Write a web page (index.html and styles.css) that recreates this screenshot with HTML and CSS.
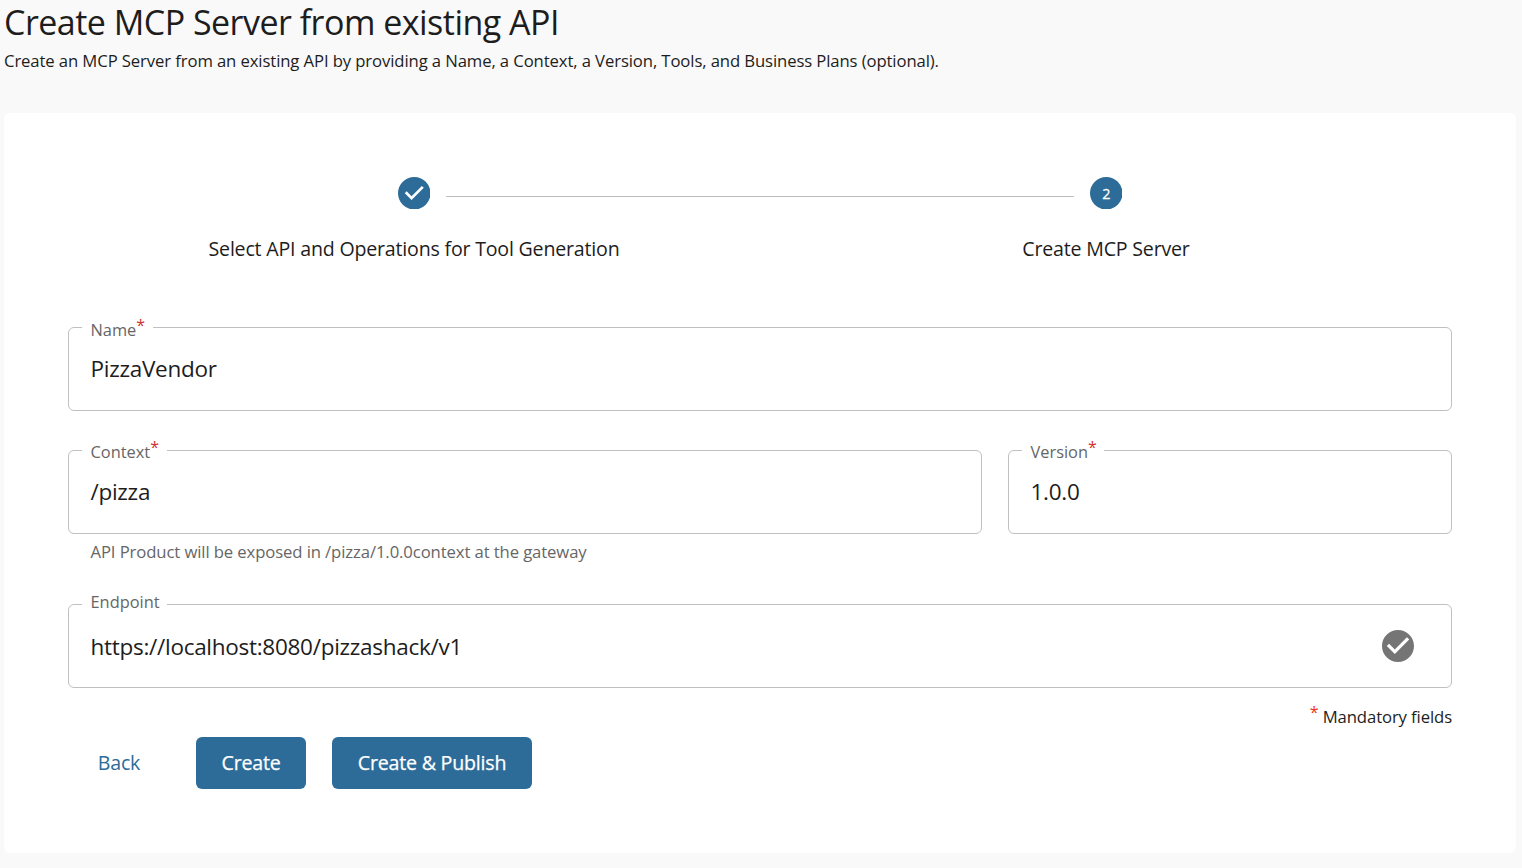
FILE: index.html
```html
<!DOCTYPE html>
<html lang="en">
<head>
<meta charset="utf-8">
<title>Create MCP Server from existing API</title>
<link rel="stylesheet" href="styles.css">
</head>
<body>
<header class="page-header">
  <h1 class="title"><span>Create MCP Server from existing API</span></h1>
  <p class="subtitle"><span>Create an MCP Server from an existing API by providing a Name, a Context, a Version, Tools, and Business Plans (optional).</span></p>
</header>
<main class="card">
  <ol class="stepper">
    <li class="step">
      <svg class="step-icon" viewBox="0 0 23.6 23.6"><path d="M12 0a12 12 0 1 0 0 24 12 12 0 0 0 0-24zm-2 17l-5-5 1.4-1.4 3.6 3.6 7.6-7.6L19 8l-9 9z"/></svg>
      <span class="step-label">Select API and Operations for Tool Generation</span>
    </li>
    <li class="connector"></li>
    <li class="step">
      <svg class="step-icon" viewBox="0 0 23.6 23.6"><circle cx="12" cy="12" r="12"/><text class="step-number" x="12" y="16" text-anchor="middle">2</text></svg>
      <span class="step-label">Create MCP Server</span>
    </li>
  </ol>
  <form class="form">
    <fieldset class="field name">
      <legend class="legend">Name<sup class="star">*</sup></legend>
      <span class="value">PizzaVendor</span>
    </fieldset>
    <div class="row">
      <fieldset class="field context">
        <legend class="legend">Context<sup class="star">*</sup></legend>
        <span class="value">/pizza</span>
      </fieldset>
      <fieldset class="field version">
        <legend class="legend">Version<sup class="star">*</sup></legend>
        <span class="value">1.0.0</span>
      </fieldset>
    </div>
    <p class="helper"><span>API Product will be exposed in /pizza/1.0.0context at the gateway</span></p>
    <fieldset class="field endpoint">
      <legend class="legend">Endpoint</legend>
      <span class="value">https://localhost:8080/pizzashack/v1</span>
      <svg class="valid" viewBox="2 2 20 20"><path d="M12 2C6.48 2 2 6.48 2 12s4.48 10 10 10 10-4.48 10-10S17.52 2 12 2zm-2 15l-5-5 1.41-1.41L10 14.17l7.59-7.59L19 8l-9 9z"/></svg>
    </fieldset>
    <p class="mandatory"><sup class="star">*</sup> <span>Mandatory fields</span></p>
    <div class="actions">
      <button type="button" class="btn back">Back</button>
      <button type="button" class="btn create">Create</button>
      <button type="button" class="btn publish">Create &amp; Publish</button>
    </div>
  </form>
</main>
</body>
</html>
```
FILE: styles.css
```css
* { box-sizing: border-box; }
body { margin: 0; height: 868px; overflow: hidden; background: #f9f9f9; color: #1d1d1d; font-family: "Open Sans", "Noto Sans", sans-serif; }
.page-header { height: 113px; padding-left: 4px; }
.title { margin: 0; font-size: 34px; font-weight: 400; line-height: 44px; letter-spacing: -0.52px; white-space: nowrap; }
.subtitle { margin: 5px 0 0; font-size: 16.7px; line-height: 24px; letter-spacing: -0.11px; white-space: nowrap; }
.card { width: 1512px; height: 740px; margin-left: 4px; padding: 64px; background: #fff; border-radius: 6px; }
.stepper { display: flex; margin: 0; padding: 0; height: 141px; list-style: none; }
.step { display: flex; flex-direction: column; align-items: center; width: 692px; flex: none; }
.connector { flex: none; width: 628px; height: 1px; margin: 19px -314px 0; background: #bdbdbd; }
.step-icon { width: 32px; height: 32px; fill: #2d6c98; }
.step-number { fill: #fff; font-size: 10.6px; font-weight: 500; stroke: #fff; stroke-width: 0.2px; }
.step-label { margin-top: 26px; font-size: 19.6px; line-height: 28px; letter-spacing: -0.2px; white-space: nowrap; }
.field { position: relative; display: block; height: 93px; margin: 0; padding: 0 21.5px; border: 1px solid #c0c0c0; border-radius: 6px; min-width: 0; }
.legend { height: 18px; margin-left: -8.5px; padding: 0 7.5px 0 8.5px; color: #666; font-size: 16.4px; line-height: 22px; white-space: nowrap; }
.star { color: #d32f2f; font-size: 16px; line-height: 0; vertical-align: 5px; }
.value { display: block; padding-top: 17px; font-size: 22.5px; line-height: 32px; letter-spacing: -0.28px; }
.row { display: flex; gap: 26px; margin-top: 30px; }
.context { width: 914px; }
.version { width: 444px; }
.helper { margin: 6px 0 31px 22.5px; color: #666; font-size: 16.7px; line-height: 24px; letter-spacing: -0.11px; }
.name .legend { line-height: 24px; }
.endpoint .legend { padding-right: 7px; line-height: 14px; }
.endpoint .value { padding-top: 18px; }
.valid { position: absolute; right: 37px; top: 17px; width: 32px; height: 32px; fill: #757575; }
.mandatory { margin: 17px 0 0; font-size: 16.7px; line-height: 24px; letter-spacing: -0.11px; text-align: right; }
.mandatory .star { color: #f03020; }
.actions { display: flex; margin-top: 8px; }
.btn { height: 52px; padding: 0; border: 0; border-radius: 6px; background: #2d6c98; color: #fff; font: 500 19.6px/52px "Open Sans", sans-serif; letter-spacing: -0.2px; -webkit-text-stroke: 0.25px currentColor; }
.back { width: 102px; background: none; color: #2d6c98; font-weight: 400; -webkit-text-stroke: 0; }
.create { width: 110px; margin-left: 26px; }
.publish { width: 200px; margin-left: 26px; }
```
